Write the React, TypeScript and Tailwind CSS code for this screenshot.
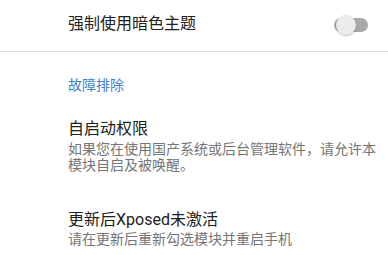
import React from "react";

const font = { fontFamily: "Roboto, 'Noto Sans CJK SC', 'Noto Sans', sans-serif" };

export default function App() {
  return (
    <div className="w-[388px] h-[255px] overflow-hidden bg-white" style={font}>
      <div className="flex items-center justify-between h-[51px] pl-[68px] pr-[20px] pb-[3px]">
        <span className="text-[16px] leading-[20px] text-[#212121]">强制使用暗色主题</span>
        <div className="relative w-[34px] h-[14px] rounded-full bg-[#a9a9a9] mt-[2px]">
          <div className="absolute left-[2px] top-[-3px] w-[20px] h-[20px] rounded-full bg-[#ececec] shadow-[0_1px_2px_rgba(0,0,0,0.25)]" />
        </div>
      </div>
      <div className="h-px bg-[#e0e0e0]" />
      <div className="pl-[68px] pt-[23px] text-[14px] leading-[20px] text-[#3d7fd1]">故障排除</div>
      <div className="pl-[68px] pr-[12px] pt-[24px]">
        <div className="text-[16px] leading-[20px] text-[#212121]">自启动权限</div>
        <div className="text-[14px] leading-[16px] text-[#757575] mt-[2px]">
          如果您在使用国产系统或后台管理软件，请允许本模块自启及被唤醒。
        </div>
      </div>
      <div className="pl-[68px] pr-[12px] pt-[37px]">
        <div className="text-[16px] leading-[20px] text-[#212121]">更新后Xposed未激活</div>
        <div className="text-[14px] leading-[16px] text-[#757575] mt-[1px]">请在更新后重新勾选模块并重启手机</div>
      </div>
    </div>
  );
}
